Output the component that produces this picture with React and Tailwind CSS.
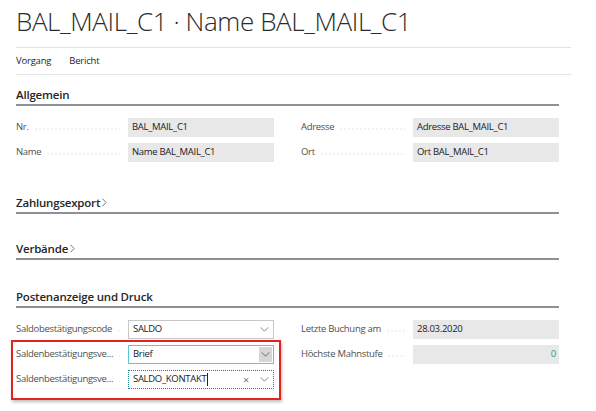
import { useState } from 'react';

const font = { fontFamily: '"Open Sans", "Noto Sans", sans-serif' };

function Chevron({ className = '' }) {
  return (
    <svg viewBox="0 0 10 6" className={`h-[5px] w-[9px] ${className}`} fill="none">
      <path d="M0.5 0.5 L5 5 L9.5 0.5" stroke="currentColor" strokeWidth="1" />
    </svg>
  );
}

function Label({ children }) {
  return (
    <div className="flex w-[112px] shrink-0 items-center pr-[8px]">
      <span className="whitespace-nowrap text-[9.5px] tracking-[-0.3px] text-[#505050]">{children}</span>
      {/* sparse dotted leader */}
      <span className="ml-[5px] mt-[3px] h-[2px] flex-1 bg-[radial-gradient(circle,#d6d6d6_0.5px,transparent_0.8px)] bg-[length:4px_2px] bg-repeat-x" />
    </div>
  );
}

function ReadField({ label, value, right }) {
  return (
    <div className="flex h-[19px]">
      <Label>{label}</Label>
      <div
        className={`flex h-[19px] flex-1 items-center bg-[#e8e8e8] px-[4px] text-[9.5px] tracking-[-0.3px] ${
          right ? 'justify-end pr-[3px] text-[#1a9aa6]' : 'text-[#212121]'
        }`}
      >
        {value}
      </div>
    </div>
  );
}

function SectionHead({ title, chevron, className = '' }) {
  return (
    <div className={`flex h-[19px] items-center border-b-2 border-[#8d929a] pb-[2px] ${className}`}>
      <span className="text-[11.5px] font-semibold tracking-[-0.2px] text-[#262626]">{title}</span>
      {chevron && (
        <svg viewBox="0 0 6 10" className="ml-[2px] h-[9px] w-[5px]" fill="none">
          <path d="M0.5 0.5 L5 5 L0.5 9.5" stroke="#555" strokeWidth="1" />
        </svg>
      )}
    </div>
  );
}

export default function App() {
  const [code] = useState('SALDO_KONTAKT');
  return (
    <div className="min-h-[411px] w-[596px] overflow-hidden bg-white" style={font}>
      <div className="pl-[16px]">
        <h1 className="h-[47px] pt-[3px] text-[26px] font-light leading-[36px] tracking-[-0.4px] text-[#2b2b2b]">
          BAL_MAIL_C1 · Name BAL_MAIL_C1
        </h1>
        <div className="mr-[25px] border-t border-[#e3e3e3]" />
        <nav className="flex h-[26px] items-center gap-[18px] text-[9.5px] tracking-[-0.2px] text-[#262626]">
          <span>Vorgang</span>
          <span>Bericht</span>
        </nav>
        <div className="mr-[25px] border-t border-[#e3e3e3]" />

        <div className="mr-[37px]">
          <SectionHead title="Allgemein" className="mt-[12px]" />
          <div className="mt-[12px] grid grid-cols-2 gap-x-[27px]">
            <div className="flex flex-col gap-[6px]">
              <ReadField label="Nr." value="BAL_MAIL_C1" />
              <ReadField label="Name" value="Name BAL_MAIL_C1" />
            </div>
            <div className="flex flex-col gap-[6px]">
              <ReadField label="Adresse" value="Adresse BAL_MAIL_C1" />
              <ReadField label="Ort" value="Ort BAL_MAIL_C1" />
            </div>
          </div>

          <SectionHead title="Zahlungsexport" chevron className="mt-[33px]" />
          <SectionHead title="Verbände" chevron className="mt-[27px]" />
          <SectionHead title="Postenanzeige und Druck" className="mt-[29px]" />

          <div className="mt-[12px] grid grid-cols-2 gap-x-[27px]">
            <div className="flex flex-col gap-[6px]">
              <div className="flex h-[19px]">
                <Label>Saldobestätigungscode</Label>
                <div className="flex flex-1 items-center justify-between border border-[#c8c8c8] bg-white pl-[4px] pr-[4px] text-[9.5px] tracking-[-0.3px] text-[#212121]">
                  <span>SALDO</span>
                  <Chevron className="text-[#6b6b6b]" />
                </div>
              </div>
              <div className="-ml-[5px] -mr-[7px] -mt-[5px] flex flex-col gap-[6px] border-2 border-[#e3231f] pb-[9px] pl-[3px] pr-[5px] pt-[3px] shadow-[1px_2px_3px_rgba(0,0,0,0.25)]">
                <div className="flex h-[19px]">
                  <Label>Saldenbestätigungsve...</Label>
                  <div className="flex flex-1 items-center justify-between border border-[#5cc6d2] bg-white pl-[4px] pr-[1px] text-[9.5px] tracking-[-0.3px] text-[#212121]">
                    <span>Brief</span>
                    <span className="flex h-[15px] w-[13px] items-center justify-center bg-[#d6d6d6]">
                      <Chevron className="text-[#555]" />
                    </span>
                  </div>
                </div>
                <div className="flex h-[19px]">
                  <Label>Saldenbestätigungsve...</Label>
                  <div className="flex flex-1 items-center border border-dotted border-[#1f7f89] bg-white pl-[4px] pr-[4px] text-[9.5px] tracking-[-0.3px] text-[#212121]">
                    <span>{code}</span>
                    <span className="ml-[1px] h-[13px] w-px bg-[#212121]" />
                    <span className="ml-auto mr-[11px] text-[11px] leading-none text-[#777]">×</span>
                    <Chevron className="text-[#6b6b6b]" />
                  </div>
                </div>
              </div>
            </div>
            <div className="flex flex-col gap-[6px]">
              <ReadField label="Letzte Buchung am" value="28.03.2020" />
              <ReadField label="Höchste Mahnstufe" value="0" right />
            </div>
          </div>
        </div>
      </div>
    </div>
  );
}
